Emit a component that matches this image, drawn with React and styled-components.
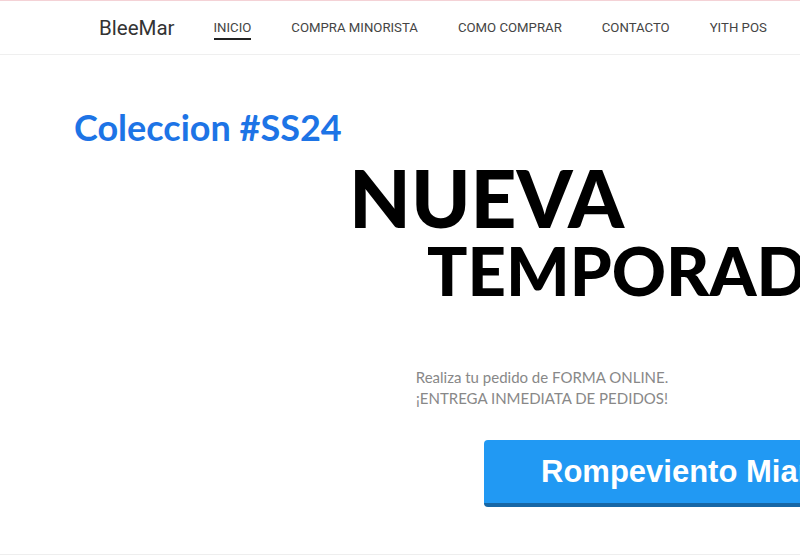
import React from "react";
import styled, { createGlobalStyle } from "styled-components";

const navLinks = ["Inicio", "Compra minorista", "Como comprar", "Contacto", "YITH POS"];

const App = () => {
  return (
    <>
      <GlobalStyle />
      <Header>
        <Logo>BleeMar</Logo>
        <Nav>
          {navLinks.map((label, i) => (
            <NavLink key={label} href="#" $active={i === 0}>
              {label}
            </NavLink>
          ))}
        </Nav>
      </Header>
      <Hero>
        <Kicker>Coleccion #SS24</Kicker>
        <Title>
          <TitleLine $size={80}>NUEVA</TitleLine>
          <TitleLine $size={67} $indent={78}>
            TEMPORADA
          </TitleLine>
        </Title>
        <Subtitle>
          Realiza tu pedido de FORMA ONLINE.
          <br />
          ¡ENTREGA INMEDIATA DE PEDIDOS!
        </Subtitle>
        <CtaButton>Rompeviento Miami</CtaButton>
      </Hero>
    </>
  );
};

const GlobalStyle = createGlobalStyle`
  html, body {
    margin: 0;
    padding: 0;
    background: #fff;
    overflow: hidden;
  }
  body {
    font-family: "Lato", "Liberation Sans", sans-serif;
  }
`;

const Header = styled.header`
  display: flex;
  align-items: center;
  height: 53px;
  padding: 0 0 0 99px;
  border-top: 1px solid #f4d2d6;
  border-bottom: 1px solid #efefef;
  font-family: "Roboto", "Liberation Sans", sans-serif;
`;

const Logo = styled.div`
  font-size: 20.5px;
  color: #333;
  margin-right: 39px;
  white-space: nowrap;
`;

const Nav = styled.nav`
  display: flex;
  gap: 40px;
  white-space: nowrap;
`;

const NavLink = styled.a`
  position: relative;
  font-size: 13.2px;
  color: #444;
  text-transform: uppercase;
  text-decoration: none;
  padding: 4px 0;

  &::after {
    content: "";
    position: absolute;
    left: 0;
    right: 0;
    bottom: -1px;
    height: 2px;
    background: #222;
    display: ${(p) => (p.$active ? "block" : "none")};
  }
`;

const Hero = styled.section`
  display: flex;
  flex-direction: column;
  align-items: flex-start;
  height: 500px;
  box-sizing: border-box;
  padding: 51px 0 0 74px;
  border-bottom: 1px solid #eee;
`;

const Kicker = styled.h2`
  margin: 0;
  font-size: 36px;
  font-weight: 700;
  line-height: 1.2;
  color: #1d74e6;
  white-space: nowrap;
`;

const Title = styled.h1`
  margin: 8px 0 0 275px;
  font-weight: 900;
  color: #000;
  white-space: nowrap;
`;

const TitleLine = styled.span`
  display: block;
  font-size: ${(p) => p.$size}px;
  line-height: 1;
  margin-left: ${(p) => p.$indent || 0}px;
`;

const Subtitle = styled.p`
  margin: 63px 0 0 318px;
  width: 300px;
  text-align: center;
  font-size: 15px;
  line-height: 21px;
  color: #888;
`;

const CtaButton = styled.button`
  margin: 31px 0 0 410px;
  height: 67px;
  padding: 0 57px;
  border: none;
  border-bottom: 4px solid #1767a6;
  border-radius: 4px;
  background: #2199f3;
  color: #fff;
  font-family: "Liberation Sans", Arial, sans-serif;
  font-size: 31px;
  font-weight: 700;
  white-space: nowrap;
  cursor: pointer;
`;

export default App;
